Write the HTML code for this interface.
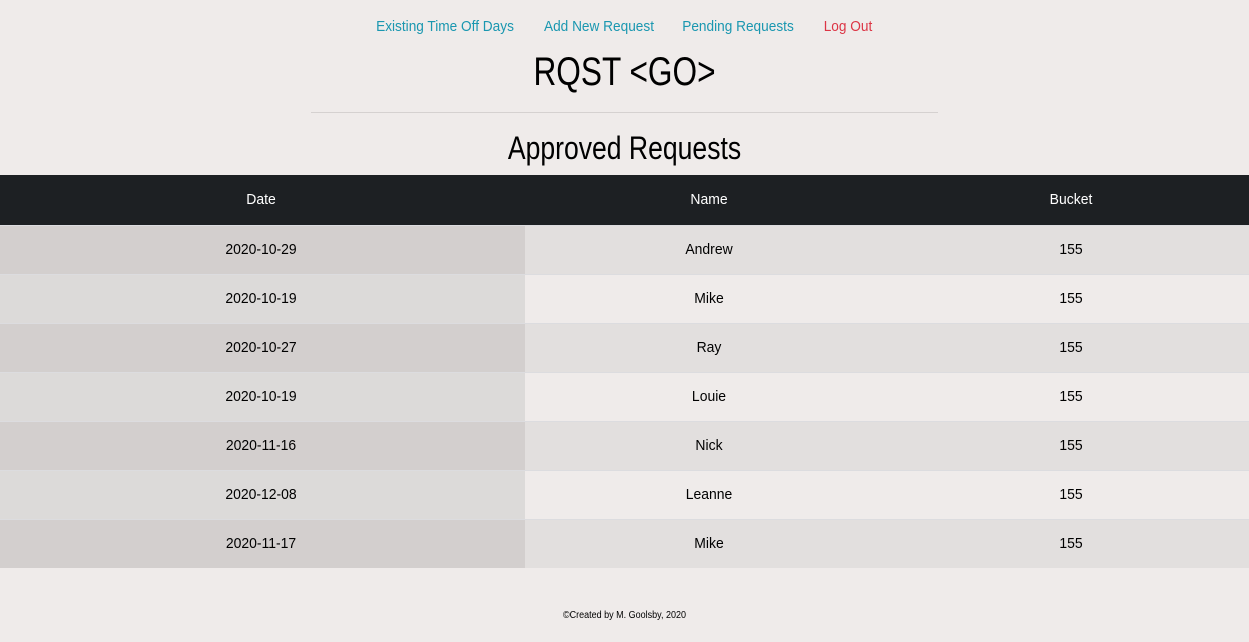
<!DOCTYPE html>
<html><head><style>
body{margin:0;background:#efebea;font-family:"Liberation Sans",sans-serif;width:1249px;height:642px;overflow:hidden;color:#000;position:relative}
.c{position:absolute;transform:translateX(-50%);white-space:nowrap}
.nav{top:18px;font-size:15px;line-height:18px;color:#1a97b0}
.nav span{display:inline-block;transform:scaleX(.91)}
h1{position:absolute;top:48px;left:0;width:1249px;text-align:center;margin:0;font-weight:normal;font-size:40px;line-height:48px;transform:scaleX(.79)}
hr{position:absolute;top:112px;left:311px;width:627px;margin:0;border:0;border-top:1px solid #d5d1d0}
h2{position:absolute;top:128px;left:0;width:1249px;text-align:center;margin:0;font-weight:normal;font-size:32px;line-height:40px;transform:scaleX(.83)}
.head{position:absolute;top:175px;left:0;width:1249px;height:50px;background:#1d2023;border-bottom:1px solid #33383c;color:#fff;font-size:15px}
.row{position:absolute;left:0;width:1249px;height:48px;border-top:1px solid #dcdcdf;font-size:15px}
.row .a{position:absolute;left:0;top:0;width:525px;height:48px}
.cell{position:absolute;top:0;line-height:48px;transform:translateX(-50%) scaleX(.93);white-space:nowrap}
.head .cell{line-height:50px}
.o{background:#e2dfde}.o .a{background:#d3cfce}
.e{background:#efebea}.e .a{background:#dcdad9}
.foot{position:absolute;top:610px;left:0;width:1249px;text-align:center;font-size:10px;transform:scaleX(.9)}
</style></head><body>
<div class="c nav" style="left:445px"><span>Existing Time Off Days</span></div>
<div class="c nav" style="left:599px"><span>Add New Request</span></div>
<div class="c nav" style="left:738px"><span>Pending Requests</span></div>
<div class="c nav" style="left:848px;color:#dc3545"><span>Log Out</span></div>
<h1>RQST &lt;GO&gt;</h1>
<hr>
<h2>Approved Requests</h2>
<div class="head"><div class="cell" style="left:261px">Date</div><div class="cell" style="left:709px">Name</div><div class="cell" style="left:1071px">Bucket</div></div>
<div class="row o" style="top:225px"><div class="a"></div><div class="cell" style="left:261px">2020-10-29</div><div class="cell" style="left:709px">Andrew</div><div class="cell" style="left:1071px">155</div></div>
<div class="row e" style="top:274px"><div class="a"></div><div class="cell" style="left:261px">2020-10-19</div><div class="cell" style="left:709px">Mike</div><div class="cell" style="left:1071px">155</div></div>
<div class="row o" style="top:323px"><div class="a"></div><div class="cell" style="left:261px">2020-10-27</div><div class="cell" style="left:709px">Ray</div><div class="cell" style="left:1071px">155</div></div>
<div class="row e" style="top:372px"><div class="a"></div><div class="cell" style="left:261px">2020-10-19</div><div class="cell" style="left:709px">Louie</div><div class="cell" style="left:1071px">155</div></div>
<div class="row o" style="top:421px"><div class="a"></div><div class="cell" style="left:261px">2020-11-16</div><div class="cell" style="left:709px">Nick</div><div class="cell" style="left:1071px">155</div></div>
<div class="row e" style="top:470px"><div class="a"></div><div class="cell" style="left:261px">2020-12-08</div><div class="cell" style="left:709px">Leanne</div><div class="cell" style="left:1071px">155</div></div>
<div class="row o" style="top:519px"><div class="a"></div><div class="cell" style="left:261px">2020-11-17</div><div class="cell" style="left:709px">Mike</div><div class="cell" style="left:1071px">155</div></div>
<div class="foot">©Created by M. Goolsby, 2020</div>
</body></html>
